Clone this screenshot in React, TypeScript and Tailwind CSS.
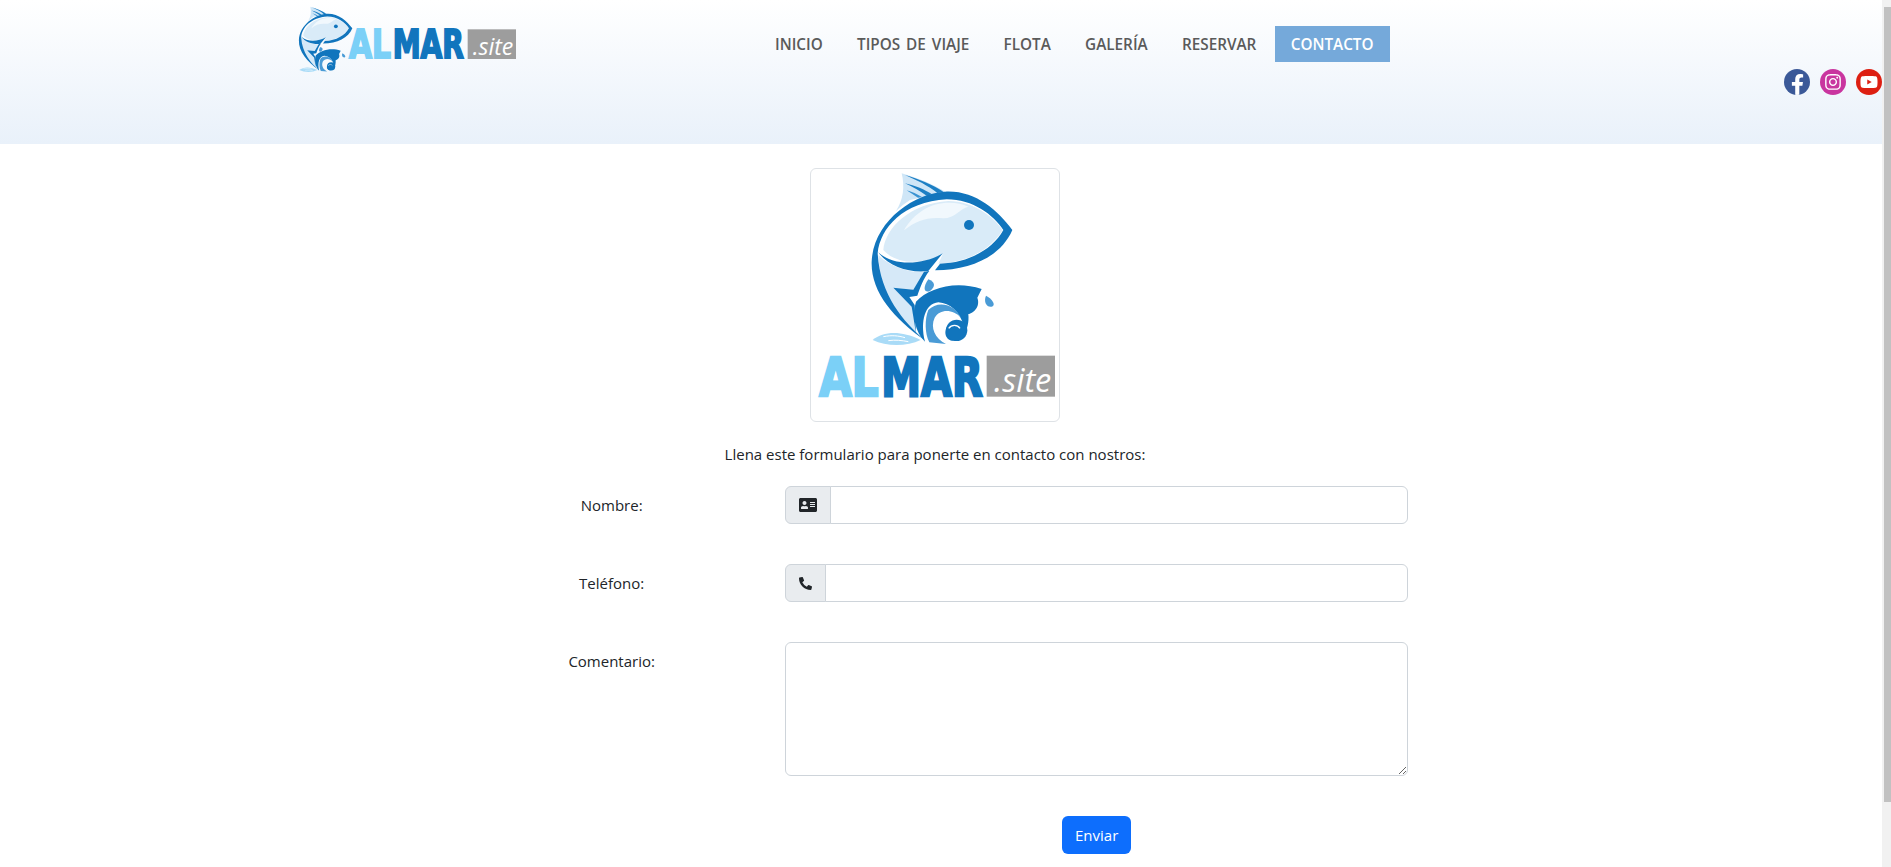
import type { ReactNode } from "react";
import { FaFacebookF, FaInstagram, FaPhoneAlt, FaAddressCard, FaYoutube } from "react-icons/fa";

const navLinks = ["INICIO", "TIPOS DE VIAJE", "FLOTA", "GALERÍA", "RESERVAR"];

// fish mark, drawn in the coordinates of the big logo
function Fish() {
  return (
    <g transform="translate(180 15)">
      {/* top fin */}
      <path d="M125 25 C170 38 220 58 258 82 L150 105 C135 115 122 125 108 138 C130 105 135 65 125 25 Z" fill="#cfe6f7" />
      <path d="M135 30 C175 42 220 60 250 80 L232 84 C205 62 170 45 135 30 Z" fill="#1c7fc4" />
      <path d="M135 55 C165 62 195 74 216 88 L200 92 C180 78 158 66 135 55 Z" fill="#1c7fc4" />
      <path d="M140 76 C155 80 172 88 186 96 L174 98 C162 90 150 83 140 76 Z" fill="#3a93d2" />
      {/* rear body */}
      <path d="M55 270 C100 315 170 325 195 320 L160 375 L100 368 L155 420 L170 510 C110 460 60 380 55 270 Z" fill="#d6e9f8" />
      {/* head */}
      <path d="M70 255 C75 190 150 115 265 108 C340 108 400 155 428 195 C395 250 330 290 235 297 L248 268 C190 300 110 300 70 255 Z" fill="#d9ebf8" />
      <path d="M132 196 C170 165 205 155 250 160 C285 160 300 130 325 125 C290 108 230 108 190 135 C165 150 145 172 132 196 Z" fill="#f1f8fd" />
      {/* outline */}
      <path d="M255 80 C345 75 412 135 457 195 C425 270 340 315 225 316 L240 296 C330 293 400 250 430 195 C400 150 340 103 260 103 C130 110 60 190 53 265 C60 390 130 470 195 526 C100 460 32 380 35 290 C40 170 160 85 255 80 Z" fill="#1175bd" />
      <path d="M55 262 C100 305 190 300 248 265 L205 318 C150 325 85 305 55 262 Z" fill="#1175bd" />
      <path d="M192 320 L208 318 C190 340 180 370 172 392 L148 396 L164 420 L168 505 L155 425 L100 368 L160 374 Z" fill="#1175bd" />
      <circle cx="327" cy="180" r="15" fill="#1175bd" />
      {/* wave */}
      <path d="M168 410 C205 370 285 345 365 372 L352 398 C362 425 340 445 325 447 C330 500 300 530 275 527 C250 522 250 485 275 472 C290 468 300 470 310 480 C300 440 270 415 235 412 C195 415 180 470 195 530 C165 500 155 450 168 410 Z" fill="#1175bd" />
      <circle cx="290" cy="496" r="32" fill="#1175bd" />
      <path d="M205 435 C230 408 280 412 303 458 C280 432 240 430 224 458 C210 488 225 520 258 537 L208 532 C194 505 194 462 205 435 Z" fill="#4a9bd6" />
      <path d="M266 490 C275 478 292 478 300 490" stroke="#ffffff" strokeWidth="4" fill="none" />
      <path d="M205 343 C225 350 228 365 210 378 C195 385 185 372 205 343 Z" fill="#4a9bd6" />
      <path d="M378 392 C395 400 410 420 395 425 C380 428 370 410 378 392 Z" fill="#4a9bd6" />
      {/* bottom fin */}
      <path d="M38 525 C70 500 120 495 182 525 C140 545 80 545 38 525 Z" fill="#a9dbf7" />
      <path d="M70 515 C95 510 115 512 135 518 M85 527 C105 524 125 526 145 530" stroke="#ffffff" strokeWidth="3" fill="none" />
    </g>
  );
}

function AlmarLogoSmall() {
  return (
    <svg viewBox="0 0 780 270" className="h-[90px] w-[260px] shrink-0">
      <g transform="translate(-25 5) scale(0.38)">
        <Fish />
      </g>
      <text x="207" y="175" textLength="126" lengthAdjust="spacingAndGlyphs" fontFamily="DejaVu Sans" fontWeight="700" fontSize="118" fill="#7bd0f7" stroke="#7bd0f7" strokeWidth="6">
        AL
      </text>
      <text x="338" y="175" textLength="214" lengthAdjust="spacingAndGlyphs" fontFamily="DejaVu Sans" fontWeight="700" fontSize="118" fill="#1175bd" stroke="#1175bd" strokeWidth="6">
        MAR
      </text>
      <rect x="563" y="88" width="145" height="89" fill="#9d9d9d" />
      <text x="578" y="165" textLength="122" lengthAdjust="spacingAndGlyphs" fontFamily="Open Sans" fontStyle="italic" fontSize="72" fill="#fff">
        .site
      </text>
    </svg>
  );
}

function AlmarLogoLarge() {
  return (
    <svg viewBox="33 28 744 754" className="block h-[252px] w-[248px]">
      <Fish />
      <text x="58" y="707" textLength="178" lengthAdjust="spacingAndGlyphs" fontFamily="DejaVu Sans" fontWeight="700" fontSize="162" fill="#7bd0f7" stroke="#7bd0f7" strokeWidth="8">
        AL
      </text>
      <text x="244" y="707" textLength="304" lengthAdjust="spacingAndGlyphs" fontFamily="DejaVu Sans" fontWeight="700" fontSize="162" fill="#1175bd" stroke="#1175bd" strokeWidth="8">
        MAR
      </text>
      <rect x="560" y="587" width="205" height="123" fill="#9d9d9d" />
      <text x="582" y="695" textLength="172" lengthAdjust="spacingAndGlyphs" fontFamily="Open Sans" fontStyle="italic" fontSize="98" fill="#fff">
        .site
      </text>
    </svg>
  );
}

function SocialIcons() {
  return (
    <div className="ml-auto mt-[69px] flex gap-[10px]">
      <span className="flex h-[26px] w-[26px] items-end justify-center overflow-hidden rounded-full bg-[#3b5998] text-white">
        <FaFacebookF className="h-[21px] w-[21px]" />
      </span>
      <span className="flex h-[26px] w-[26px] items-center justify-center rounded-full bg-[#c9359f] text-white">
        <FaInstagram className="h-[18px] w-[18px]" />
      </span>
      <span className="flex h-[26px] w-[26px] items-center justify-center rounded-full bg-[#dd1f12] text-white">
        <FaYoutube className="h-[18px] w-[18px]" />
      </span>
    </div>
  );
}

function Header() {
  return (
    <header className="flex h-[144px] bg-gradient-to-b from-white to-[#e9f1fa] pl-[280px] font-['Open_Sans',sans-serif]">
      <AlmarLogoSmall />
      <nav className="ml-[219px] mt-[26px] flex h-[36px] items-center text-[15.3px] font-semibold text-[#5a5a5a] [word-spacing:2px]">
        {navLinks.map((label) => (
          <a key={label} className="mr-[2.25px] px-4">
            {label}
          </a>
        ))}
        <a className="flex h-[36px] w-[115px] items-center justify-center bg-[#75a9da] text-white">CONTACTO</a>
      </nav>
      <SocialIcons />
    </header>
  );
}

function FormRow({ label, children }: { label: string; children: ReactNode }) {
  return (
    <div className="grid grid-cols-12">
      <label className="col-span-4 text-center leading-[38px]">{label}</label>
      <div className="col-span-8 px-3">{children}</div>
    </div>
  );
}

function InputGroup({ icon }: { icon: ReactNode }) {
  return (
    <div className="flex h-[38px]">
      <span className="flex items-center rounded-l-[6px] border border-[#ced4da] bg-[#e9ecef] px-[13px] text-[#212529]">{icon}</span>
      <input type="text" className="-ml-px min-w-0 flex-1 rounded-r-[6px] border border-[#ced4da] bg-white outline-none" />
    </div>
  );
}

export default function App() {
  return (
    <div className="flex h-[867px] overflow-hidden bg-white font-['Open_Sans',sans-serif] text-[15px] text-[#212529]">
      <div className="min-w-0 flex-1">
        <Header />
        <main className="ml-[450px] w-[970px] pt-[24px]">
          <div className="mx-auto w-[250px] rounded-[6px] border border-[#dee2e6] bg-white">
            <AlmarLogoLarge />
          </div>
          <p className="mt-[21px] text-center leading-[22px]">Llena este formulario para ponerte en contacto con nostros:</p>
          <div className="mt-[21px] flex flex-col gap-[40px]">
            <FormRow label="Nombre:">
              <InputGroup icon={<FaAddressCard className="h-4 w-[18px]" />} />
            </FormRow>
            <FormRow label="Teléfono:">
              <InputGroup icon={<FaPhoneAlt className="h-[13px] w-[13px]" />} />
            </FormRow>
            <FormRow label="Comentario:">
              <textarea className="block h-[134px] w-full rounded-[6px] border border-[#ced4da] bg-white outline-none" />
            </FormRow>
          </div>
          <div className="mt-[40px] grid grid-cols-12">
            <div className="col-span-8 col-start-5 flex justify-center">
              <button className="h-[38px] w-[69px] rounded-[6px] bg-[#0d6efd] text-white">Enviar</button>
            </div>
          </div>
        </main>
      </div>
      {/* page scrollbar */}
      <div className="w-[9px] shrink-0 bg-[#f1f1f1] pl-[2px] pt-[7px]">
        <div className="h-[795px] bg-[#c1c1c1]" />
      </div>
    </div>
  );
}
